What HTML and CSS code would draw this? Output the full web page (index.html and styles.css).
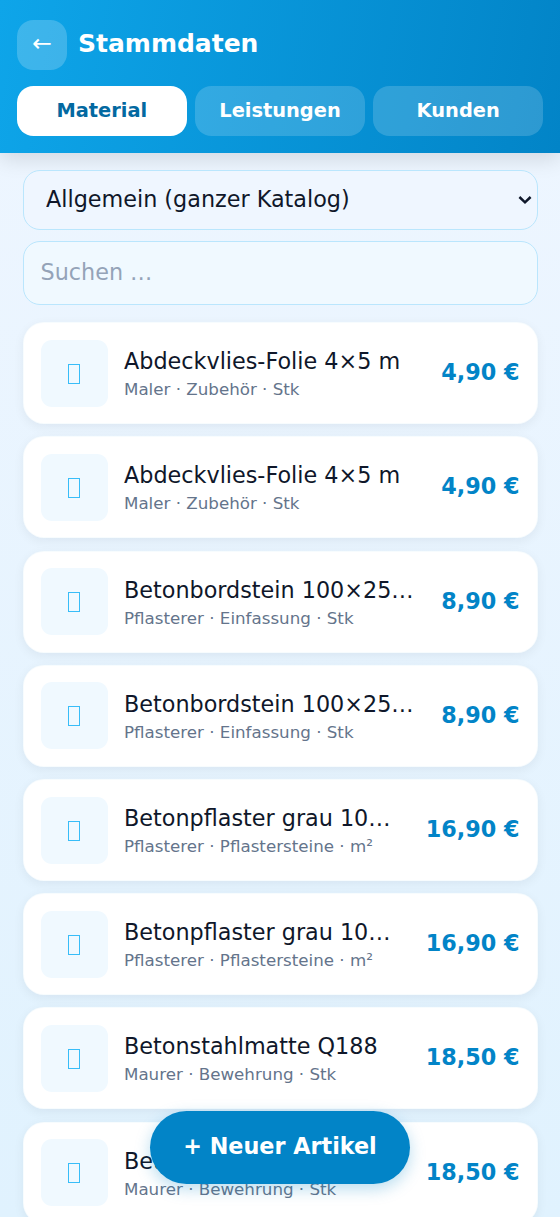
FILE: index.html
```html
<!DOCTYPE html>
<html lang="de">
<head>
<meta charset="utf-8">
<title>Stammdaten</title>
<link rel="stylesheet" href="styles.css">
</head>
<body>
<header class="header">
  <div class="title-row"><button class="back">←</button><h1 class="title">Stammdaten</h1></div>
  <nav class="tabs"><button class="tab active">Material</button><button class="tab">Leistungen</button><button class="tab">Kunden</button></nav>
</header>
<main class="content">
  <div class="select-wrap">
    <select class="field select"><option>Allgemein (ganzer Katalog)</option></select>
    <svg class="chevron" width="14" height="10" viewBox="0 0 14 10" fill="none" stroke="#0f172a" stroke-width="2.5"><path d="M1.4 2 7 7.3 12.6 2"/></svg>
  </div>
  <input class="field search" placeholder="Suchen …">
  <div class="list">
    <article class="row"><div class="thumb"><i class="glyph"></i></div><div class="info"><div class="name">Abdeckvlies-Folie 4×5 m</div><div class="meta">Maler · Zubehör · Stk</div></div><div class="price">4,90 €</div></article>
    <article class="row"><div class="thumb"><i class="glyph"></i></div><div class="info"><div class="name">Abdeckvlies-Folie 4×5 m</div><div class="meta">Maler · Zubehör · Stk</div></div><div class="price">4,90 €</div></article>
    <article class="row"><div class="thumb"><i class="glyph"></i></div><div class="info"><div class="name">Betonbordstein 100×25…</div><div class="meta">Pflasterer · Einfassung · Stk</div></div><div class="price">8,90 €</div></article>
    <article class="row"><div class="thumb"><i class="glyph"></i></div><div class="info"><div class="name">Betonbordstein 100×25…</div><div class="meta">Pflasterer · Einfassung · Stk</div></div><div class="price">8,90 €</div></article>
    <article class="row"><div class="thumb"><i class="glyph"></i></div><div class="info"><div class="name">Betonpflaster grau 10…</div><div class="meta">Pflasterer · Pflastersteine · m²</div></div><div class="price">16,90 €</div></article>
    <article class="row"><div class="thumb"><i class="glyph"></i></div><div class="info"><div class="name">Betonpflaster grau 10…</div><div class="meta">Pflasterer · Pflastersteine · m²</div></div><div class="price">16,90 €</div></article>
    <article class="row"><div class="thumb"><i class="glyph"></i></div><div class="info"><div class="name">Betonstahlmatte Q188</div><div class="meta">Maurer · Bewehrung · Stk</div></div><div class="price">18,50 €</div></article>
    <article class="row"><div class="thumb"><i class="glyph"></i></div><div class="info"><div class="name">Betonstahlmatte Q188</div><div class="meta">Maurer · Bewehrung · Stk</div></div><div class="price">18,50 €</div></article>
  </div>
</main>
<button class="fab">+ Neuer Artikel</button>
</body>
</html>
```
FILE: styles.css
```css
* { box-sizing: border-box; }
body {
  margin: 0;
  height: 1217px;
  overflow: hidden;
  position: relative;
  font-family: "DejaVu Sans", sans-serif;
  color: #0f172a;
  background: linear-gradient(180deg, #eff6ff, #e0f2fe);
}
button, input, select { font-family: inherit; margin: 0; }
.header {
  height: 153px;
  padding: 19.5px 17px 0;
  background: linear-gradient(100deg, #0ea5e9, #0284c7);
  box-shadow: 0 6px 20px rgba(0, 0, 0, .12);
}
.title-row { display: flex; align-items: center; gap: 11px; height: 50px; }
.back {
  width: 50px; height: 50px; padding: 0 0 4px;
  border: 0;
  border-radius: 16.5px;
  background: rgba(255, 255, 255, .2);
  color: #fff; font-size: 23.5px;
}
.title { margin: 0; color: #fff; font-size: 25px; line-height: 28px; padding-bottom: 2px; }
.tabs { display: grid; grid-template-columns: repeat(3, 1fr); gap: 8.5px; margin-top: 16.5px; }
.tab {
  height: 50px; padding: 0 0 1px;
  border: 0;
  border-radius: 16.5px;
  background: rgba(255, 255, 255, .17);
  color: #fff; font-size: 19.4px; font-weight: 700;
}
.active { background: #fff; color: #0369a1; }
.content { padding: 17px 22.5px 0; }
.field {
  display: block; width: 100%;
  border: 1.5px solid #bae6fd;
  border-radius: 17px;
  background: #f0f9ff;
  font-size: 22.3px; color: #0f172a;
}
.select-wrap { position: relative; }
.select { appearance: none; height: 60px; padding: 0 30px 2px 22.5px; background: #eff6ff; }
.chevron { position: absolute; right: 5.5px; top: 25px; pointer-events: none; }
.search { height: 64px; margin-top: 11px; padding: 0 17px 2px; outline: 0; }
.search::placeholder { color: #94a3b8; opacity: 1; }
.list { display: flex; flex-direction: column; gap: 12.2px; margin-top: 17.3px; }
.row {
  display: flex; align-items: center; flex: none;
  height: 102px; padding: 0 17px;
  border: 1px solid rgba(14, 165, 233, .03);
  border-radius: 21px;
  background: #fff;
  box-shadow: 0 3px 11px rgba(15, 23, 42, .06);
}
.thumb {
  display: flex; align-items: center; justify-content: center;
  width: 67px; height: 67px; flex: none;
  border-radius: 11px; background: #f0f9ff;
}
.glyph { width: 12.5px; height: 20px; margin-top: 1px; border: 1.2px solid #38bdf8; }
.info { flex: 1; min-width: 0; padding-left: 16.5px; }
.name { margin-top: 2px; font-size: 22.3px; line-height: 28px; white-space: nowrap; }
.meta { margin-top: 2px; font-size: 16.7px; line-height: 24px; color: #64748b; white-space: nowrap; }
.price { padding-bottom: 2px; font-size: 22.3px; font-weight: 700; color: #0284c7; white-space: nowrap; }
.fab {
  position: absolute; left: 150px; top: 1111px;
  width: 260px; height: 72.5px; padding: 0 0 2px;
  border: 0; border-radius: 37px;
  background: #0284c7; color: #fff;
  font-size: 22.3px; font-weight: 700;
  box-shadow: 0 5px 16px rgba(2, 132, 199, .28);
}
```
